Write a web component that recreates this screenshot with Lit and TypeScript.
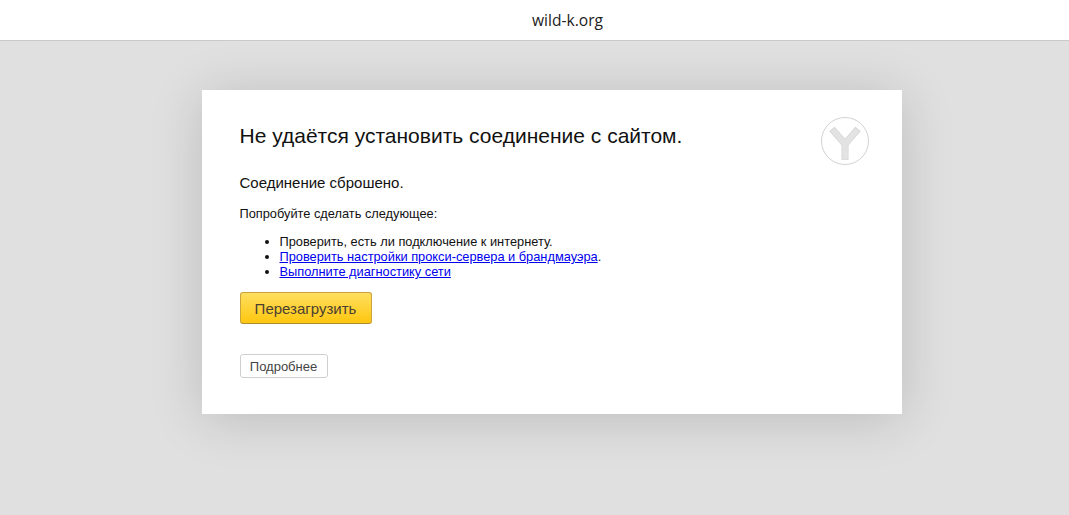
import { LitElement, html, css } from "lit";
import { customElement } from "lit/decorators.js";

@customElement("app-root")
export class AppRoot extends LitElement {
  static styles = css`
    :host {
      display: flex;
      flex-direction: column;
      width: 1069px;
      height: 515px;
      overflow: hidden;
      background: #e0e0e0;
      font-family: "Liberation Sans", Arial, sans-serif;
      color: #111;
    }
    .top {
      height: 40px;
      flex: none;
      background: #fff;
      border-bottom: 1px solid #c9c9c9;
      display: flex;
      align-items: center;
      justify-content: center;
      padding-left: 66px;
      font-family: "Open Sans", sans-serif;
      font-size: 15.6px;
      color: #222;
    }
    .stage {
      flex: 1;
      display: flex;
      justify-content: center;
      padding-top: 49px;
      padding-left: 34px;
    }
    .card {
      width: 700px;
      height: 324px;
      box-sizing: border-box;
      background: #fff;
      box-shadow: 0 5px 50px rgba(0, 0, 0, 0.16);
      padding: 33px 33px 0 38px;
      display: flex;
      justify-content: space-between;
      align-items: flex-start;
    }
    .content {
      display: flex;
      flex-direction: column;
      align-items: flex-start;
    }
    h1 {
      margin: 0;
      font-size: 21px;
      line-height: 26px;
      font-weight: 400;
    }
    .reason {
      margin: 24px 0 0;
      font-size: 15px;
      line-height: 20px;
    }
    .try {
      margin: 13px 0 0;
      font-size: 12.8px;
      line-height: 15px;
    }
    ul {
      margin: 13px 0 0;
      padding: 0 0 0 40px;
      font-size: 12.8px;
      line-height: 15px;
    }
    a {
      color: #0000ee;
      text-decoration: underline;
    }
    button {
      font-family: inherit;
      box-sizing: border-box;
      padding: 0;
      display: block;
    }
    .reload {
      margin-top: 13px;
      width: 132px;
      height: 32px;
      font-size: 15px;
      color: #4a4030;
      border: 1px solid #c9a33b;
      border-bottom-color: #b08c2c;
      border-radius: 3px;
      background: linear-gradient(#ffdf60, #fec60f);
    }
    .more {
      margin-top: 30px;
      width: 88px;
      height: 24px;
      font-size: 13px;
      color: #444;
      background: #fff;
      border: 1px solid #cfcfcf;
      border-radius: 3px;
    }
    svg {
      flex: none;
      margin-top: -6px;
      display: block;
    }
  `;

  render() {
    return html`
      <div class="top">wild-k.org</div>
      <div class="stage">
        <div class="card">
          <div class="content">
            <h1>Не удаётся установить соединение с сайтом.</h1>
            <p class="reason">Соединение сброшено.</p>
            <p class="try">Попробуйте сделать следующее:</p>
            <ul>
              <li>Проверить, есть ли подключение к интернету.</li>
              <li><a href="#">Проверить настройки прокси-сервера и брандмауэра</a>.</li>
              <li><a href="#">Выполните диагностику сети</a></li>
            </ul>
            <button class="reload">Перезагрузить</button>
            <button class="more">Подробнее</button>
          </div>
          <svg width="48" height="48" viewBox="0 0 48 48" aria-hidden="true">
            <circle cx="24" cy="24" r="23.5" fill="#fff" stroke="#d2d2d2" />
            <path d="M11 12 L24 27 L37 12 M24 27 V43" fill="none" stroke="#d4d4d4" stroke-width="7" />
            <path d="M11.6 12.7 L24 27 L36.4 12.7 M24 27 V42.4" fill="none" stroke="#e3e3e3" stroke-width="5.6" />
          </svg>
        </div>
      </div>
    `;
  }
}
